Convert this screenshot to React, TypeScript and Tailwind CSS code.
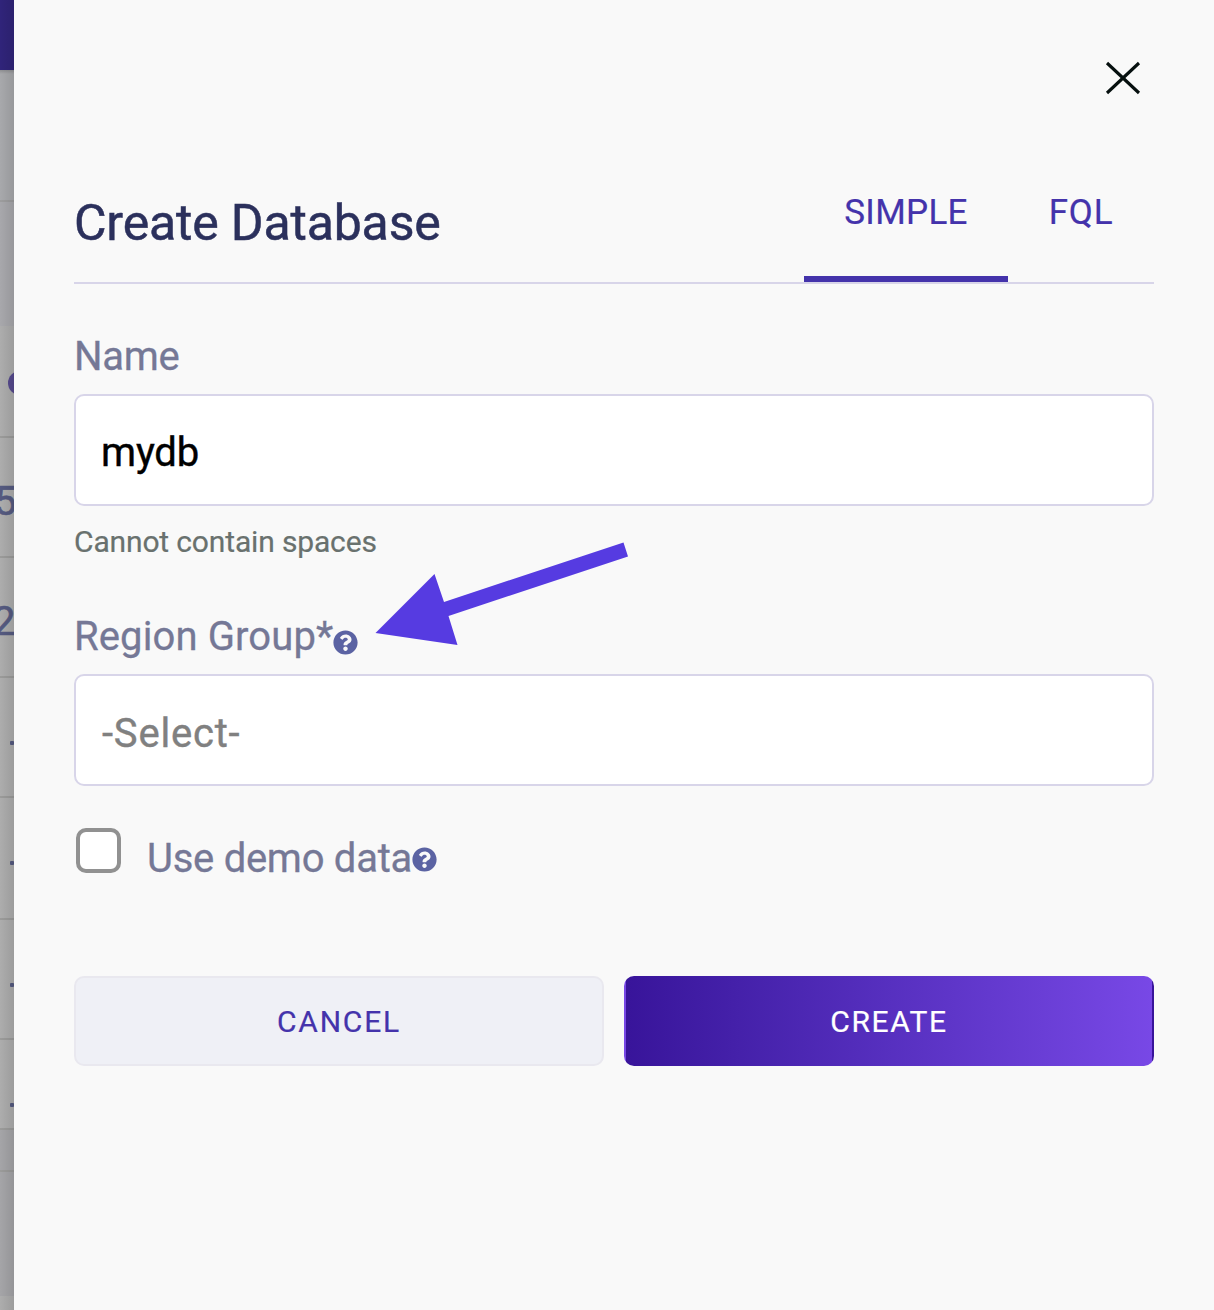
import { useState } from 'react';

const rows = [
  { h: 'h-[120px]', text: '5', cls: 'pt-[40px] -ml-[6px]' },
  { h: 'h-[120px]', text: '2', cls: 'pt-[40px] -ml-[7px]' },
  { h: 'h-[120px]', text: '', cls: '' },
  { h: 'h-[122px]', text: '', cls: '' },
  { h: 'h-[120px]', text: '', cls: '' },
];

function Dash() {
  return <div className="ml-[10px] mt-[63px] h-1 w-[14px] rounded-[1px] bg-[#555a80]" />;
}

function PageBehind() {
  return (
    <div className="relative h-full w-[14px] shrink-0 overflow-hidden bg-[#adadad]">
      <div className="h-[70px] bg-[#30247a]" />
      <div className="h-[132px] border-b-2 border-[#9d9d9e] bg-[#a8a9ac]" />
      <div className="h-[124px] bg-[#a8a8ac]" />
      <div className="h-[112px] border-b-2 border-[#9b9b9a] pt-[45px]">
        <div className="ml-2 size-6 rounded-full bg-[#564a8e]" />
      </div>
      {rows.map((r, i) => (
        <div key={i} className={`${r.h} border-b-2 border-[#9b9b9a]`}>
          {r.text ? (
            <div className={`${r.cls} text-[40px] leading-[48px] text-[#555a80] [-webkit-text-stroke:0.6px]`}>{r.text}</div>
          ) : (
            <div className="flex"><Dash /></div>
          )}
        </div>
      ))}
      <div className="flex h-[90px] border-b-2 border-[#9b9b9a]"><Dash /></div>
      <div className="h-[42px] border-b-2 border-[#9b9b9a] bg-[#a5a5a8]" />
      <div className="h-[124px] bg-[#a5a5a8]" />
      <div className="absolute inset-x-0 top-[70px] h-1 bg-linear-to-b from-black/15 to-transparent" />
      <div className="absolute inset-0 bg-linear-to-r from-black/0 to-black/10" />
    </div>
  );
}

function Help({ className }: { className: string }) {
  return (
    <svg viewBox="0 0 512 512" className={`size-[25px] ${className}`} fill="#5b63a3">
      <path d="M504 256c0 136.997-111.043 248-248 248S8 392.997 8 256C8 119.083 119.043 8 256 8s248 111.083 248 248zM262.655 90c-54.497 0-89.255 22.957-116.549 63.758-3.536 5.286-2.353 12.415 2.715 16.258l34.699 26.31c5.205 3.947 12.621 3.008 16.665-2.122 17.864-22.658 30.113-35.797 57.303-35.797 20.429 0 45.698 13.148 45.698 32.958 0 14.976-12.363 22.667-32.534 33.976C247.128 238.528 216 254.941 216 296v4c0 6.627 5.373 12 12 12h56c6.627 0 12-5.373 12-12v-1.333c0-28.462 83.186-29.647 83.186-106.667 0-58.002-60.165-102-116.531-102zM256 338c-25.365 0-46 20.635-46 46 0 25.364 20.635 46 46 46s46-20.636 46-46c0-25.365-20.635-46-46-46z" />
    </svg>
  );
}

export default function App() {
  const [name, setName] = useState('mydb');
  return (
    <div className="flex h-[1310px] w-[1214px] overflow-hidden bg-[#f9f9f9] font-[Roboto,sans-serif]">
      <PageBehind />
      <main className="relative flex flex-1 flex-col px-[60px]">
        <div className="flex h-[193px] justify-end pr-[13px] pt-[61px]">
          <button aria-label="Close" className="h-[34px] w-9">
            <svg viewBox="0 0 36 34" className="h-[34px] w-9" stroke="#06100f" strokeWidth="3.100" fill="none">
              <path d="M2 2 34 32M34 2 2 32" />
            </svg>
          </button>
        </div>
        <header className="flex h-[91px] justify-between border-b-2 border-[#d8d5e9]">
          <h1 className="text-[50px] leading-[60px] tracking-[-0.17px] text-[#2b305c] [-webkit-text-stroke:0.5px]">Create Database</h1>
          <nav className="flex text-[35px] leading-[38px] tracking-[0.3px] text-[#4433ab] [-webkit-text-stroke:0.2px]">
            <button className="flex w-[204px] justify-center border-b-6 border-[#4433ab] pt-px">SIMPLE</button>
            <button className="flex w-[146px] justify-center border-b-6 border-transparent pt-px tracking-[0.8px]">FQL</button>
          </nav>
        </header>
        <label className="mt-[49px] h-[61px] text-[40px] leading-[48px] tracking-[-0.3px] text-[#757896] [-webkit-text-stroke:0.3px]">Name</label>
        <input
          value={name}
          onChange={(e) => setName(e.target.value)}
          className="h-[112px] rounded-[10px] border-2 border-[#d8d5e9] bg-white px-[25px] pt-1 text-[40px] tracking-[-0.2px] text-black outline-none [-webkit-text-stroke:0.4px]"
        />
        <p className="mt-[18px] h-9 text-[30px] leading-9 tracking-[-0.15px] text-[#69716e] [-webkit-text-stroke:0.2px]">Cannot contain spaces</p>
        <div className="mt-[53px] flex h-[61px] text-[40px] leading-[48px] text-[#757896]">
          <span className="tracking-[0.12px] [-webkit-text-stroke:0.3px]">Region Group*</span>
          <Help className="mt-[17px]" />
        </div>
        <div className="flex h-[112px] items-center rounded-[10px] border-2 border-[#d8d5e9] bg-white px-[26px] pt-2 text-[40px] tracking-[0.8px] text-[#808080] [-webkit-text-stroke:0.4px]">-Select-</div>
        <div className="mt-[42px] flex h-[60px] text-[40px] leading-[48px] text-[#757896]">
          <span className="ml-[2px] mr-[26px] size-[45px] rounded-[10px] border-4 border-[#919191] bg-white" />
          <span className="pt-[7px] tracking-[-0.27px] [-webkit-text-stroke:0.3px]">Use demo data</span>
          <Help className="mt-[19px]" />
        </div>
        <div className="mt-[88px] grid h-[90px] grid-cols-2 gap-5 text-[30px] [-webkit-text-stroke:0.2px]">
          <button className="rounded-[10px] border-2 border-[#e9e8ef] bg-[#eff0f6] tracking-[1.8px] text-[#4433ab]">CANCEL</button>
          <button className="rounded-[10px] border-2 border-transparent bg-linear-to-r from-[#38149a] to-[#7848e6] tracking-[1.6px] text-white">CREATE</button>
        </div>
        <svg viewBox="0 0 256 106" className="absolute left-[360px] top-[541px] h-[106px] w-64" fill="#563be1">
          <path d="M1.500 92 60.500 33 70 61 249.500 1.500 254 15.500 74.500 75 83.500 104Z" />
        </svg>
      </main>
    </div>
  );
}
